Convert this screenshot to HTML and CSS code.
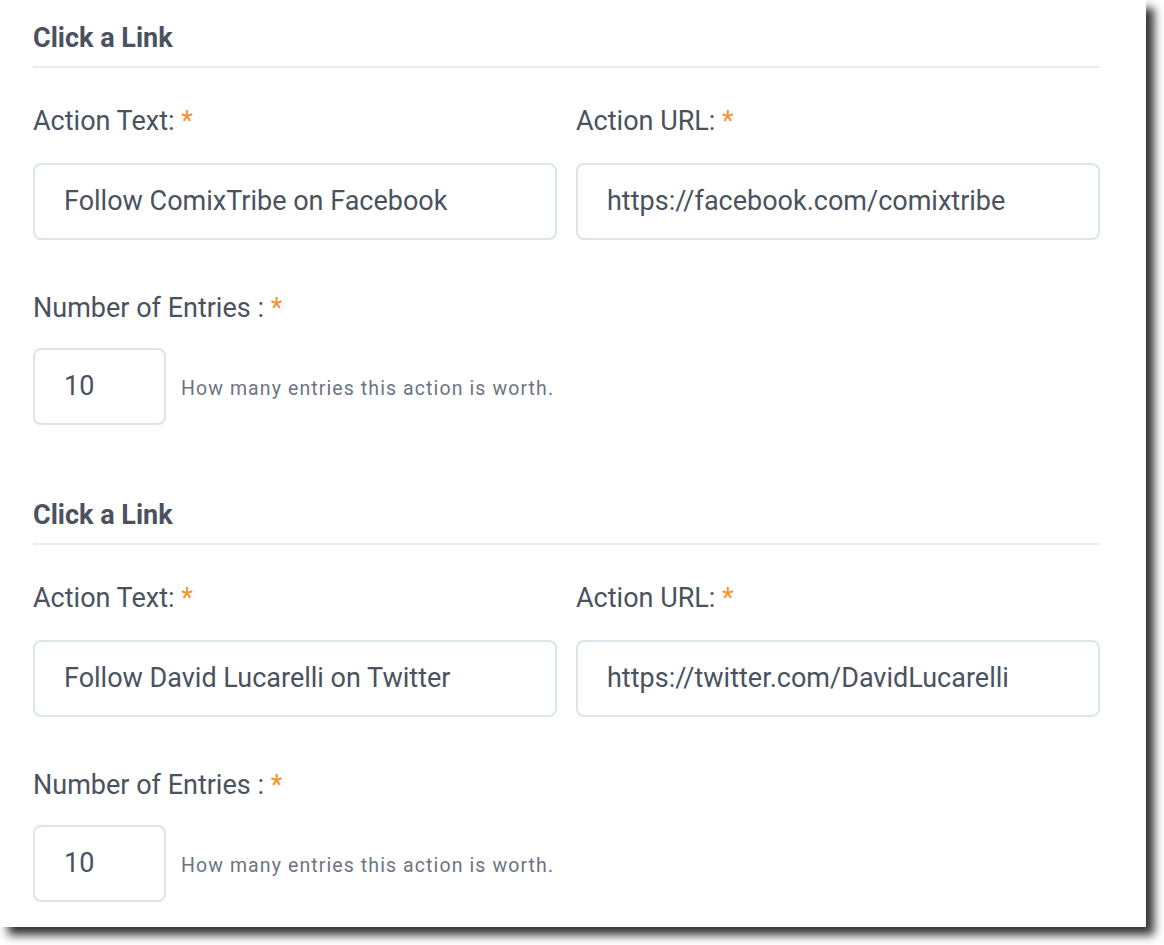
FILE: index.html
```html
<!DOCTYPE html>
<html lang="en">
<head>
<meta charset="utf-8">
<title>Click a Link</title>
<link rel="stylesheet" href="styles.css">
</head>
<body>
<div class="card">
  <section class="action">
    <h2 class="action-title">Click a Link</h2>
    <div class="divider"></div>
    <div class="row">
      <div class="field">
        <label class="label">Action Text: <span class="req">*</span></label>
        <div class="input">Follow ComixTribe on Facebook</div>
      </div>
      <div class="field">
        <label class="label">Action URL: <span class="req">*</span></label>
        <div class="input">https://facebook.com/comixtribe</div>
      </div>
    </div>
    <label class="label label-entries">Number of Entries : <span class="req">*</span></label>
    <div class="entries">
      <div class="input input-small">10</div>
      <span class="help">How many entries this action is worth.</span>
    </div>
  </section>
  <section class="action">
    <h2 class="action-title">Click a Link</h2>
    <div class="divider"></div>
    <div class="row">
      <div class="field">
        <label class="label">Action Text: <span class="req">*</span></label>
        <div class="input">Follow David Lucarelli on Twitter</div>
      </div>
      <div class="field">
        <label class="label">Action URL: <span class="req">*</span></label>
        <div class="input">https://twitter.com/DavidLucarelli</div>
      </div>
    </div>
    <label class="label label-entries">Number of Entries : <span class="req">*</span></label>
    <div class="entries">
      <div class="input input-small">10</div>
      <span class="help">How many entries this action is worth.</span>
    </div>
  </section>
</div>
</body>
</html>
```
FILE: styles.css
```css
html, body {
  margin: 0;
  padding: 0;
  background: #ffffff;
}
body {
  width: 1164px;
  height: 945px;
  overflow: hidden;
  font-family: Roboto, "Liberation Sans", Arial, sans-serif;
  color: #4a5260;
}
.card {
  width: 1146px;
  height: 927px;
  background: #ffffff;
  box-shadow: 8px 8px 9px #333333;
  box-sizing: border-box;
  padding: 23px 0 0 33px;
  overflow: hidden;
}
.action {
  width: 1067px;
  margin-bottom: 75px;
}
.action-title {
  margin: 0;
  font-size: 27px;
  line-height: 30px;
  font-weight: 700;
  color: #4a5260;
}
.divider {
  margin-top: 13px;
  height: 2px;
  background: #e6edf3;
}
.row {
  display: flex;
  gap: 19px;
  margin-top: 38px;
}
.field {
  flex: 1;
  display: flex;
  flex-direction: column;
}
.label {
  display: block;
  font-size: 27px;
  line-height: 30px;
  font-weight: 400;
  color: #4a5260;
}
.req {
  color: #f5922f;
}
.input {
  margin-top: 27px;
  height: 77px;
  box-sizing: border-box;
  border: 2px solid #dce4ec;
  border-radius: 8px;
  padding: 0 0 2px 29px;
  display: flex;
  align-items: center;
  font-size: 27px;
  color: #4a5260;
}
.label-entries {
  margin-top: 53px;
}
.entries {
  display: flex;
  align-items: center;
  gap: 15px;
  margin-top: 25px;
}
.entries .input {
  margin-top: 0;
}
.input-small {
  width: 133px;
}
.help {
  font-size: 19.5px;
  letter-spacing: 1.1px;
  color: #6c7482;
  padding-top: 3px;
}
```
